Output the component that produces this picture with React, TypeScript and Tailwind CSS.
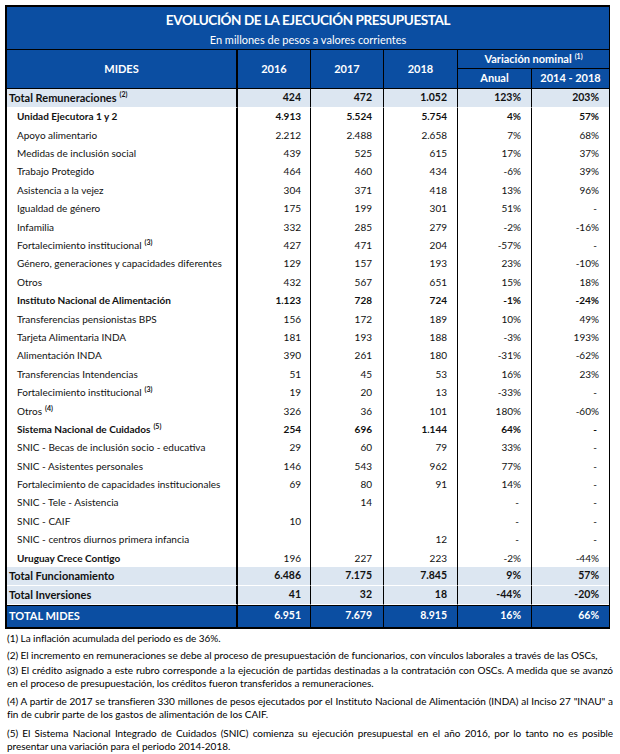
import React from "react";

type Kind = "total" | "bold" | "normal" | "label" | "grand";
type Row = { label: string; note?: string; v: string[]; kind?: Kind };

const rows: Row[] = [
  { label: "Total Remuneraciones", note: "(2)", v: ["424", "472", "1.052", "123%", "203%"], kind: "total" },
  { label: "Unidad Ejecutora 1 y 2", v: ["4.913", "5.524", "5.754", "4%", "57%"], kind: "bold" },
  { label: "Apoyo alimentario", v: ["2.212", "2.488", "2.658", "7%", "68%"] },
  { label: "Medidas de inclusión social", v: ["439", "525", "615", "17%", "37%"] },
  { label: "Trabajo Protegido", v: ["464", "460", "434", "-6%", "39%"] },
  { label: "Asistencia a la vejez", v: ["304", "371", "418", "13%", "96%"] },
  { label: "Igualdad de género", v: ["175", "199", "301", "51%", "-"] },
  { label: "Infamilia", v: ["332", "285", "279", "-2%", "-16%"] },
  { label: "Fortalecimiento institucional", note: "(3)", v: ["427", "471", "204", "-57%", "-"] },
  { label: "Género, generaciones y capacidades diferentes", v: ["129", "157", "193", "23%", "-10%"] },
  { label: "Otros", v: ["432", "567", "651", "15%", "18%"] },
  { label: "Instituto Nacional de Alimentación", v: ["1.123", "728", "724", "-1%", "-24%"], kind: "bold" },
  { label: "Transferencias pensionistas BPS", v: ["156", "172", "189", "10%", "49%"] },
  { label: "Tarjeta Alimentaria INDA", v: ["181", "193", "188", "-3%", "193%"] },
  { label: "Alimentación INDA", v: ["390", "261", "180", "-31%", "-62%"] },
  { label: "Transferencias Intendencias", v: ["51", "45", "53", "16%", "23%"] },
  { label: "Fortalecimiento institucional", note: "(3)", v: ["19", "20", "13", "-33%", "-"] },
  { label: "Otros", note: "(4)", v: ["326", "36", "101", "180%", "-60%"] },
  { label: "Sistema Nacional de Cuidados", note: "(5)", v: ["254", "696", "1.144", "64%", "-"], kind: "bold" },
  { label: "SNIC - Becas de inclusión socio - educativa", v: ["29", "60", "79", "33%", "-"] },
  { label: "SNIC - Asistentes personales", v: ["146", "543", "962", "77%", "-"] },
  { label: "Fortalecimiento de capacidades institucionales", v: ["69", "80", "91", "14%", "-"] },
  { label: "SNIC - Tele - Asistencia", v: ["", "14", "", "-", "-"] },
  { label: "SNIC - CAIF", v: ["10", "", "", "-", "-"] },
  { label: "SNIC - centros diurnos primera infancia", v: ["", "", "12", "-", "-"] },
  { label: "Uruguay Crece Contigo", v: ["196", "227", "223", "-2%", "-44%"], kind: "label" },
  { label: "Total Funcionamiento", v: ["6.486", "7.175", "7.845", "9%", "57%"], kind: "total" },
  { label: "Total Inversiones", v: ["41", "32", "18", "-44%", "-20%"], kind: "total" },
  { label: "TOTAL MIDES", v: ["6.951", "7.679", "8.915", "16%", "66%"], kind: "grand" },
];

const grid = "grid grid-cols-[231px_73px_73px_74px_74px_77px]";
const pads = ["pr-[9px]", "pr-[11px]", "pr-[10px]", "pr-[10px]", "pr-[10px]"];

function BodyRow({ r }: { r: Row }) {
  const kind = r.kind ?? "normal";
  const isTotal = kind === "total" || kind === "grand";
  const bg =
    kind === "total"
      ? "bg-[#dce6f1] border-b border-white"
      : kind === "grand"
        ? "bg-[#0b4ea2] text-white border-t border-black"
        : "bg-white";
  const h = kind === "grand" ? "h-[22px]" : kind === "total" ? "h-[18.6px]" : "h-[18.4px]";
  const numBold = kind !== "normal" && kind !== "label";

  return (
    <div className={`${grid} ${h}`}>
      <div
        className={`${bg} flex items-center border-r-2 border-r-black ${
          isTotal ? "pl-[2px] text-[11px]" : "pl-[10px] text-[10px]"
        } ${kind === "normal" ? "" : "font-bold"}`}
      >
        {r.label}
        {r.note && <sup className="ml-[3px] text-[7px] font-bold">{r.note}</sup>}
      </div>
      {r.v.map((val, i) => (
        <div
          key={i}
          className={`${bg} flex items-center justify-end ${pads[i]} ${
            isTotal ? "text-[10.5px]" : "text-[10px]"
          } ${numBold ? "font-bold" : ""} ${i < 4 ? "border-r border-r-black" : ""} ${
            val === "-" ? "pr-[12px]" : ""
          }`}
        >
          {val}
        </div>
      ))}
    </div>
  );
}

function Header() {
  return (
    <>
      <div className="flex h-[43px] flex-col items-center border-b border-black bg-[#0b4ea2] text-white">
        <div className="mt-[3px] text-[13.5px] font-bold tracking-[-0.4px]">
          EVOLUCIÓN DE LA EJECUCIÓN PRESUPUESTAL
        </div>
        <div className="mt-[2px] text-[11px]">En millones de pesos a valores corrientes</div>
      </div>
      <div className={`${grid} grid-rows-[19px_19px] border-b border-black bg-[#0b4ea2] text-[11px] font-bold text-white`}>
        <div className="row-span-2 flex items-center justify-center border-r-2 border-black">MIDES</div>
        <div className="row-span-2 flex items-center justify-center border-r border-black">2016</div>
        <div className="row-span-2 flex items-center justify-center border-r border-black">2017</div>
        <div className="row-span-2 flex items-center justify-center border-r border-black">2018</div>
        <div className="col-span-2 flex items-center justify-center border-b border-black">
          Variación nominal<sup className="ml-[3px] text-[7px]">(1)</sup>
        </div>
        <div className="flex items-center justify-center border-r border-black">Anual</div>
        <div className="flex items-center justify-center">2014 - 2018</div>
      </div>
    </>
  );
}

export default function App() {
  return (
    <div className="h-[754px] w-[620px] bg-white pt-[5px] font-['Lato',sans-serif] text-[#111]">
      <div className="ml-[5px] w-[605px] border-2 border-r border-black">
        <Header />
        {rows.map((r, i) => (
          <BodyRow key={i} r={r} />
        ))}
      </div>

      <div className="ml-[7px] mt-[3px] w-[606px] text-[10px] leading-[13px] tracking-[-0.04px] text-black">
        <p>(1) La inflación acumulada del periodo es de 36%.</p>
        <p className="mt-[4px]">
          (2) El incremento en remuneraciones se debe al proceso de presupuestación de funcionarios, con vínculos
          laborales a través de las OSCs,
        </p>
        <p className="mt-[2px] text-justify">
          (3) El crédito asignado a este rubro corresponde a la ejecución de partidas destinadas a la contratación con
          OSCs. A medida que se avanzó en el proceso de presupuestación, los créditos fueron transferidos a
          remuneraciones.
        </p>
        <p className="mt-[5px] text-justify">
          (4) A partir de 2017 se transfieren 330 millones de pesos ejecutados por el Instituto Nacional de Alimentación
          (INDA) al Inciso 27 "INAU" a fin de cubrir parte de los gastos de alimentación de los CAIF.
        </p>
        <p className="mt-[6px] text-justify">
          (5) El Sistema Nacional Integrado de Cuidados (SNIC) comienza su ejecución presupuestal en el año 2016, por lo
          tanto no es posible presentar una variación para el periodo 2014-2018.
        </p>
      </div>
    </div>
  );
}
